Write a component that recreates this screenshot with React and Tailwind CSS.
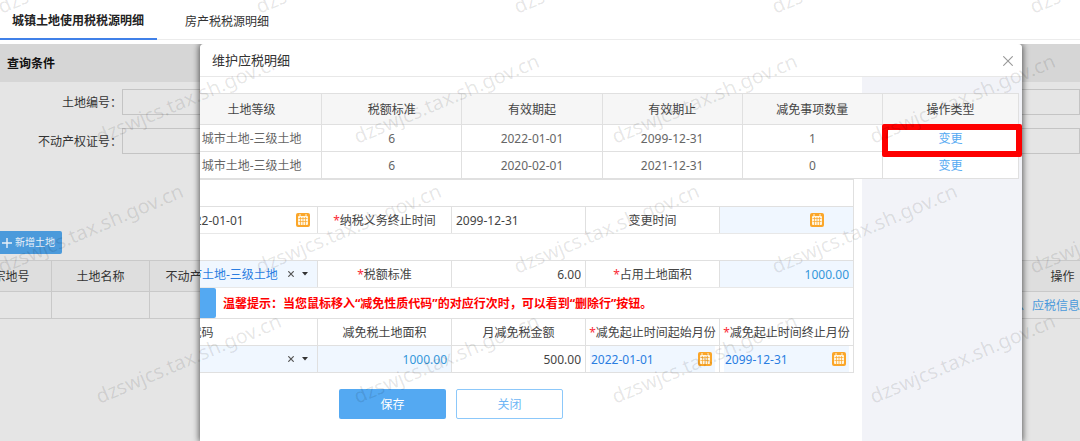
import React from "react";

const rates = [
    { level: "城市土地-三级土地", rate: "6", from: "2022-01-01", to: "2099-12-31", count: "1", marked: true },
    { level: "城市土地-三级土地", rate: "6", from: "2020-02-01", to: "2021-12-31", count: "0", marked: false },
];

// [x, y] of the start of each watermark's baseline
const watermarks = [];
for (let row = 0; row < 4; row++) {
    const indent = row % 2 ? 100 : 2;
    for (let col = 0; col < (row % 2 ? 4 : 5); col++) {
        watermarks.push([indent + col * 258, 15 + row * 130]);
    }
}

function CalendarIcon() {
    return (
        <svg viewBox="0 0 14 14" className="block h-3.5 w-3.5">
            <rect width="14" height="14" rx="2" fill="#fba629" />
            <rect x="2" y="3" width="10" height="9" rx="1" fill="#fff5e0" />
            <path d="M4 1v3M10 1v3" stroke="#fff5e0" strokeWidth="1" />
            <path d="M2.5 5.5h9M2.5 8.5h9M4.5 4v8M7 4v8M9.5 4v8" stroke="#fba629" strokeWidth="0.7" fill="none" />
        </svg>
    );
}

function DateField({ label, value, className }) {
    return (
        <div className={`flex h-full items-center ${className}`}>
            <input
                aria-label={label}
                defaultValue={value}
                className="h-full w-full min-w-0 flex-1 bg-transparent outline-none"
            />
            <button type="button" aria-label={`选择${label}`}>
                <CalendarIcon />
            </button>
        </div>
    );
}

function SelectField({ label, value }) {
    return (
        <div className="flex h-full items-center bg-[#f0f7ff] pr-[9px] text-[#2a7de1]">
            <select
                aria-label={label}
                defaultValue={value}
                className="h-full w-full min-w-0 flex-1 appearance-none bg-transparent pt-px outline-none"
            >
                <option value={value}>{value}</option>
            </select>
            <button type="button" aria-label="清除" className="mr-2">
                <svg viewBox="0 0 6 6" className="block h-1.5 w-1.5">
                    <path d="M0.3 0.3L5.7 5.7M5.7 0.3L0.3 5.7" stroke="#555" strokeWidth="1.2" />
                </svg>
            </button>
            <svg viewBox="0 0 6 4" className="block h-1 w-1.5">
                <path d="M0 0h6L3 3.5z" fill="#333" />
            </svg>
        </div>
    );
}

function Label({ required, children }) {
    return (
        <div className="flex items-center justify-center border-t border-l border-[#e0e0e0] pt-0.5 whitespace-nowrap text-[#444]">
            {required && <span className="text-red-500">*</span>}
            {children}
        </div>
    );
}

function Cell({ children }) {
    return <div className="border-t border-l border-[#e0e0e0] text-[#444]">{children}</div>;
}

function RateTable() {
    const th = "border border-[#e0e0e0] p-0 pt-0.5 font-normal";
    const td = "border border-[#e0e0e0] p-0 pt-px";
    return (
        <div className="-mr-[157px] -ml-[19px]">
            <table className="w-full table-fixed border-collapse bg-white text-center text-[#666]">
                <thead>
                    <tr className="h-[31px] bg-[#f6f6f6] text-[#444]">
                        <th className={th}>土地等级</th>
                        <th className={th}>税额标准</th>
                        <th className={th}>有效期起</th>
                        <th className={th}>有效期止</th>
                        <th className={th}>减免事项数量</th>
                        <th className={`w-[136px] ${th}`}>操作类型</th>
                    </tr>
                </thead>
                <tbody>
                    {rates.map((r) => (
                        <tr key={r.from} className="h-[27px]">
                            <td className={td}>{r.level}</td>
                            <td className={td}>{r.rate}</td>
                            <td className={td}>{r.from}</td>
                            <td className={td}>{r.to}</td>
                            <td className={td}>{r.count}</td>
                            <td className={`relative ${td}`}>
                                <a href="#change" className="text-[#54a9f2]">变更</a>
                                {r.marked && (
                                    <span className="pointer-events-none absolute -top-px -right-1 -bottom-1.5 -left-px rounded-xs border-6 border-[#fe0000]" />
                                )}
                            </td>
                        </tr>
                    ))}
                </tbody>
            </table>
        </div>
    );
}

function ReliefTable() {
    const th = "border border-[#e0e0e0] p-0 pt-0.5 font-normal whitespace-nowrap";
    const td = "h-[27px] border border-[#e0e0e0] p-0";
    return (
        <div className="mr-2 -ml-[163px]">
            <table className="w-full table-fixed border-collapse text-[#444]">
                <thead>
                    <tr className="h-[27px]">
                        <th className={th}>减免性质代码</th>
                        <th className={`w-[134px] ${th}`}>减免税土地面积</th>
                        <th className={`w-[134px] ${th}`}>月减免税金额</th>
                        <th className={`w-[134px] ${th}`}><span className="text-red-500">*</span>减免起止时间起始月份</th>
                        <th className={`w-[134px] ${th}`}><span className="text-red-500">*</span>减免起止时间终止月份</th>
                    </tr>
                </thead>
                <tbody>
                    <tr>
                        <td className={td}>
                            <SelectField label="减免性质代码" value="" />
                        </td>
                        <td className={td}>
                            <input aria-label="减免税土地面积" defaultValue="1000.00" className="block h-full w-full bg-[#f0f7ff] pr-1 text-right text-[#3498db] outline-none" />
                        </td>
                        <td className={td}>
                            <input aria-label="月减免税金额" defaultValue="500.00" className="block h-full w-full pr-1 text-right outline-none" />
                        </td>
                        <td className={td}>
                            <DateField label="起始月份" value="2022-01-01" className="mx-1 bg-[#f0f7ff] pr-[3px] pl-px text-[#2a7de1]" />
                        </td>
                        <td className={td}>
                            <DateField label="终止月份" value="2099-12-31" className="mx-1 bg-[#f0f7ff] pr-[3px] pl-px text-[#2a7de1]" />
                        </td>
                    </tr>
                </tbody>
            </table>
        </div>
    );
}

function DetailModal() {
    return (
        <div role="dialog" aria-label="维护应税明细" className="absolute top-0 right-[58px] bottom-0 left-[200px] flex flex-col overflow-hidden rounded-t-sm bg-white">
            <div className="flex h-[33px] shrink-0 items-center justify-between border-b border-[#e8e8e8] pt-0.5 pr-[9px] pl-3">
                <h2 className="text-[13px] text-[#333]">维护应税明细</h2>
                <button type="button" aria-label="关闭窗口">
                    <svg viewBox="0 0 10 10" className="block h-2.5 w-2.5">
                        <path d="M0.3 0.3L9.7 9.7M9.7 0.3L0.3 9.7" stroke="#999" strokeWidth="1.1" />
                    </svg>
                </button>
            </div>
            <div className="flex-1 overflow-hidden bg-[#f2f3f8]">
                <div className="mr-40 h-full bg-white pt-4">
                    <RateTable />
                    <div className="mr-2 -ml-[23px] border-r border-[#e0e0e0]">
                        <div className="h-[27px] border-t border-[#e0e0e0]" />
                        <div className="grid h-[27px] grid-cols-[140fr_134fr_134fr_134fr_134fr]">
                            <Cell>
                                <DateField label="纳税义务起始时间" value="2022-01-01" className="pr-[7px] pl-[3px]" />
                            </Cell>
                            <Label required>纳税义务终止时间</Label>
                            <Cell>
                                <input aria-label="纳税义务终止时间" defaultValue="2099-12-31" className="block h-full w-full pl-1 outline-none" />
                            </Cell>
                            <Label>变更时间</Label>
                            <Cell>
                                <DateField label="变更时间" value="" className="bg-[#f0f7ff] pr-[29px]" />
                            </Cell>
                        </div>
                        <div className="h-[27px] border-t border-[#e8e8e8]" />
                        <div className="grid h-[27px] grid-cols-[140fr_134fr_134fr_134fr_134fr]">
                            <Cell>
                                <SelectField label="土地等级" value="城市土地-三级土地" />
                            </Cell>
                            <Label required>税额标准</Label>
                            <Cell>
                                <input aria-label="税额标准" defaultValue="6.00" className="block h-full w-full pr-1 text-right outline-none" />
                            </Cell>
                            <Label required>占用土地面积</Label>
                            <Cell>
                                <input aria-label="占用土地面积" defaultValue="1000.00" className="block h-full w-full bg-[#f0f7ff] pr-1 text-right text-[#3498db] outline-none" />
                            </Cell>
                        </div>
                        <div className="flex h-[31px] items-center border-t border-[#e8e8e8] pl-[23px]">
                            <button type="button" aria-label="增加行" className="h-full w-4 rounded-r-xs bg-[#54a9f2]" />
                            <p className="pt-px pl-[7px] font-bold whitespace-nowrap text-[#ff0000]">
                                温馨提示：当您鼠标移入“减免性质代码”的对应行次时，可以看到“删除行”按钮。
                            </p>
                        </div>
                    </div>
                    <ReliefTable />
                    <div className="mt-4 flex gap-2.5 pl-[139px]">
                        <button type="button" className="h-[30px] w-[107px] rounded-xs bg-[#54a9f2] pt-0.5 text-white">保存</button>
                        <button type="button" className="h-[30px] w-[107px] rounded-xs border border-[#8cc8fa] bg-white pt-0.5 text-[#6db6f5]">关闭</button>
                    </div>
                </div>
            </div>
        </div>
    );
}

function QueryPage() {
    const cell = "border border-[#c9c9c9] p-0 pt-px font-normal whitespace-nowrap";
    return (
        <div>
            <h1 className="flex h-[38px] items-center bg-[#d6d6d6] pt-0.5 pl-[7px] font-bold text-[#111]">查询条件</h1>
            <div className="flex flex-col gap-[13px] pt-[7px]">
                <div className="flex h-[26px] items-center">
                    <label htmlFor="land-no" className="w-[122px] shrink-0 pt-0.5 text-right">土地编号：</label>
                    <input id="land-no" className="h-full flex-1 border border-[#c4c4c4] outline-none" />
                </div>
                <div className="flex h-[26px] items-center">
                    <label htmlFor="cert-no" className="w-[122px] shrink-0 pt-0.5 text-right">不动产权证号：</label>
                    <input id="cert-no" className="h-full flex-1 border border-[#c4c4c4] outline-none" />
                </div>
            </div>
            <button type="button" className="mt-[77px] flex h-[23px] w-[62px] items-center gap-[3px] rounded-r-xs bg-[#4b9adb] pl-0.5 text-[10px] text-[#e8f0f8]">
                <svg viewBox="0 0 10 10" className="h-2.5 w-2.5">
                    <path d="M5 0v10M0 5h10" stroke="#e8f0f8" strokeWidth="1.4" />
                </svg>
                新增土地
            </button>
            <div className="mt-1.5 -mr-[70px] -ml-[29px]">
                <table className="w-full table-fixed border-collapse text-center">
                    <thead>
                        <tr className="h-[31px] bg-[#dedede]">
                            <th className={`w-20 ${cell}`}>宗地号</th>
                            <th className={`w-[98px] ${cell}`}>土地名称</th>
                            <th className={`w-[104px] ${cell}`}>不动产权证号</th>
                            <th className={cell} />
                            <th className={`w-[174px] ${cell}`}>操作</th>
                        </tr>
                    </thead>
                    <tbody>
                        <tr className="h-[27px]">
                            <td className={cell} />
                            <td className={cell} />
                            <td className={cell} />
                            <td className={cell} />
                            <td className={cell}>
                                <div className="flex gap-2 text-[#4b9adb]">
                                    <a href="#land">土地信息</a>
                                    <a href="#tax">应税信息</a>
                                </div>
                            </td>
                        </tr>
                    </tbody>
                </table>
            </div>
        </div>
    );
}

export default function App() {
    return (
        <div className="relative flex min-h-screen flex-col overflow-hidden bg-white font-['Noto_Sans','Noto_Sans_CJK_SC',sans-serif] text-xs text-[#333]">
            <nav className="flex h-10 shrink-0 border-b border-[#ececec]">
                <a href="#land-tax" className="flex h-10 items-center border-b-2 border-[#4080e8] pt-1 pr-[13px] pl-3 font-bold text-[#222]">
                    城镇土地使用税税源明细
                </a>
                <a href="#house-tax" className="flex items-center pt-1 pl-7">房产税税源明细</a>
            </nav>
            <main className="relative mt-1 flex-1 overflow-hidden bg-[#e5e5e5]">
                <QueryPage />
                <div className="absolute top-0 right-[58px] bottom-0 left-[200px] rounded-t-sm shadow-[0_0_6px_1px_rgba(0,0,0,0.6)]" />
                <DetailModal />
            </main>
            <div aria-hidden="true" className="pointer-events-none absolute inset-0 overflow-hidden">
                {watermarks.map(([x, y]) => (
                    <span
                        key={`${x}-${y}`}
                        className="absolute origin-bottom-left -rotate-23 text-[20px] leading-4 whitespace-nowrap text-black/10"
                        style={{ left: x, bottom: `calc(100% - ${y}px)` }}
                    >
                        dzswjcs.tax.sh.gov.cn
                    </span>
                ))}
            </div>
        </div>
    );
}
